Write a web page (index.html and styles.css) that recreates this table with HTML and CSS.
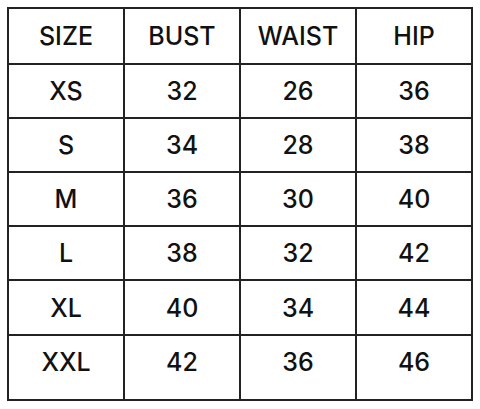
FILE: index.html
```html
<!DOCTYPE html>
<html>
<head>
<meta charset="utf-8">
<link rel="stylesheet" href="styles.css">
</head>
<body>
<table class="size-chart">
  <tr class="head"><th>SIZE</th><th>BUST</th><th>WAIST</th><th>HIP</th></tr>
  <tr><td>XS</td><td>32</td><td>26</td><td>36</td></tr>
  <tr><td>S</td><td>34</td><td>28</td><td>38</td></tr>
  <tr><td>M</td><td>36</td><td>30</td><td>40</td></tr>
  <tr><td>L</td><td>38</td><td>32</td><td>42</td></tr>
  <tr class="tall"><td>XL</td><td>40</td><td>34</td><td>44</td></tr>
  <tr class="last"><td>XXL</td><td>42</td><td>36</td><td>46</td></tr>
</table>
</body>
</html>
```
FILE: styles.css
```css
html, body {
  margin: 0;
  padding: 0;
  background: #fff;
}
body {
  padding: 7px;
  font-family: "Inter", "Liberation Sans", sans-serif;
  color: #111;
}
.size-chart {
  border-collapse: collapse;
  width: 466px;
  table-layout: fixed;
}
.size-chart th,
.size-chart td {
  border: 2px solid #222;
  text-align: center;
  vertical-align: middle;
  font-size: 25px;
  font-weight: 500;
  padding: 0;
  height: 52px;
}
.size-chart .head th {
  height: 54px;
}
.size-chart .tall td {
  height: 53px;
}
.size-chart .last td {
  height: 51px;
  padding-bottom: 12px;
}
```
